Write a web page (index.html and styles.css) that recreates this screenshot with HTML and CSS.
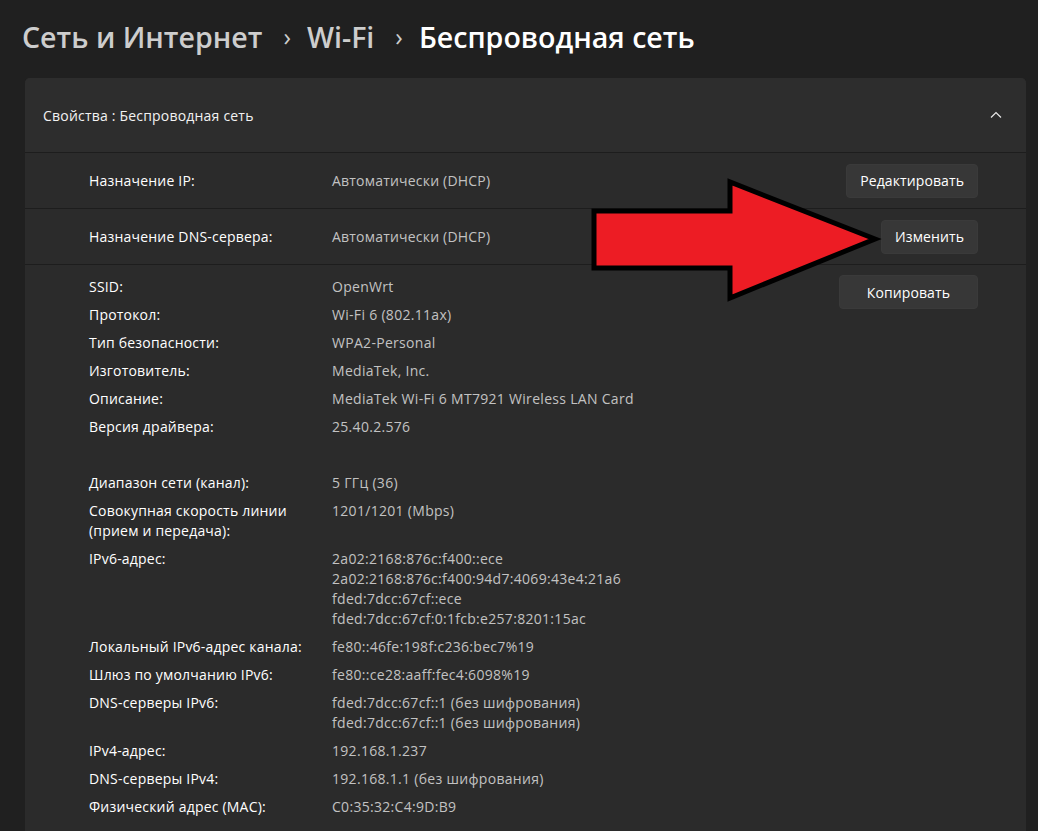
FILE: index.html
```html
<!DOCTYPE html>
<html lang="ru">
<head>
<meta charset="utf-8">
<title>Беспроводная сеть</title>
<link rel="stylesheet" href="styles.css">
</head>
<body>
<div class="page">
  <h1 class="crumbs">
    <span class="crumb">Сеть и Интернет</span>
    <span class="sep">›</span>
    <span class="crumb">Wi-Fi</span>
    <span class="sep">›</span>
    <span class="crumb current">Беспроводная сеть</span>
  </h1>

  <section class="card">
    <div class="card-head">
      <span class="head-title">Свойства : Беспроводная сеть</span>
      <svg class="caret" width="12" height="8" viewBox="0 0 12 8"><path d="M1 6.5 L6 1.5 L11 6.5" fill="none" stroke="#e8e8e8" stroke-width="1.2"/></svg>
    </div>

    <div class="row">
      <span class="label">Назначение IP:</span>
      <span class="value">Автоматически (DHCP)</span>
      <button class="btn">Редактировать</button>
    </div>
    <div class="row">
      <span class="label">Назначение DNS-сервера:</span>
      <span class="value">Автоматически (DHCP)</span>
      <button class="btn">Изменить</button>
    </div>

    <div class="details">
      <dl class="props">
        <dt>SSID:</dt><dd>OpenWrt</dd>
        <dt>Протокол:</dt><dd>Wi-Fi 6 (802.11ax)</dd>
        <dt>Тип безопасности:</dt><dd>WPA2-Personal</dd>
        <dt>Изготовитель:</dt><dd>MediaTek, Inc.</dd>
        <dt>Описание:</dt><dd>MediaTek Wi-Fi 6 MT7921 Wireless LAN Card</dd>
        <dt>Версия драйвера:</dt><dd>25.40.2.576</dd>
        <dt class="blank">&nbsp;</dt><dd class="blank">&nbsp;</dd>
        <dt>Диапазон сети (канал):</dt><dd>5 ГГц (36)</dd>
        <dt>Совокупная скорость линии<br>(прием и передача):</dt><dd>1201/1201 (Mbps)</dd>
        <dt>IPv6-адрес:</dt><dd>2a02:2168:876c:f400::ece<br>2a02:2168:876c:f400:94d7:4069:43e4:21a6<br>fded:7dcc:67cf::ece<br>fded:7dcc:67cf:0:1fcb:e257:8201:15ac</dd>
        <dt>Локальный IPv6-адрес канала:</dt><dd>fe80::46fe:198f:c236:bec7%19</dd>
        <dt>Шлюз по умолчанию IPv6:</dt><dd>fe80::ce28:aaff:fec4:6098%19</dd>
        <dt>DNS-серверы IPv6:</dt><dd>fded:7dcc:67cf::1 (без шифрования)<br>fded:7dcc:67cf::1 (без шифрования)</dd>
        <dt>IPv4-адрес:</dt><dd>192.168.1.237</dd>
        <dt>DNS-серверы IPv4:</dt><dd>192.168.1.1 (без шифрования)</dd>
        <dt>Физический адрес (MAC):</dt><dd>C0:35:32:C4:9D:B9</dd>
      </dl>
      <button class="btn btn-wide">Копировать</button>
    </div>
  </section>

  <svg class="arrow" width="300" height="130" viewBox="0 0 300 130">
    <polygon points="7,34 143,34 143,5 288,62 143,121 143,91 7,91" fill="#ed1c24" stroke="#000" stroke-width="5" stroke-linejoin="miter"/>
  </svg>
</div>
</body>
</html>
```

FILE: styles.css
```css
* { box-sizing: border-box; }

html, body {
  margin: 0;
  background: #202020;
  height: 100%;
  overflow: hidden;
}

body {
  font-family: "Open Sans", "Noto Sans", sans-serif;
  color: #ffffff;
}

.page {
  position: relative;
  padding: 0 12px 0 25px;
}

.crumbs {
  margin: 0;
  height: 78px;
  display: flex;
  align-items: center;
  font-size: 28.6px;
  font-weight: 600;
  letter-spacing: 0;
  margin-left: -3px;
  padding-bottom: 6px;
}

.crumb { color: #cdcdcd; }
.crumb.current { color: #ffffff; }
.sep {
  color: #cdcdcd;
  font-size: 25px;
  font-weight: 400;
  margin: 0 16px 0 21px;
}

.card {
  width: 1001px;
  background: #2b2b2b;
  border-radius: 5px 5px 0 0;
  min-height: 760px;
}

.card-head {
  height: 75px;
  display: flex;
  align-items: center;
  justify-content: space-between;
  padding: 0 24px 0 18px;
  background: #2d2d2d;
  border-radius: 5px 5px 0 0;
  border-bottom: 1px solid #1d1d1d;
}

.head-title {
  font-size: 14px;
  letter-spacing: 0.2px;
  color: #f2f2f2;
}

.caret { display: block; }

.row {
  height: 56px;
  display: grid;
  grid-template-columns: 243px 1fr auto;
  align-items: center;
  padding: 0 48px 0 64px;
  border-bottom: 1px solid #1d1d1d;
  font-size: 14px;
  letter-spacing: 0.2px;
}

.label { color: #ffffff; }
.value { color: #c2c2c2; }

.btn {
  font-family: inherit;
  font-size: 14px;
  letter-spacing: 0.1px;
  color: #ffffff;
  background: #373737;
  border: 1px solid #3a3a3a;
  border-radius: 4px;
  height: 34px;
  padding: 0 13px;
}

.btn-wide { padding: 0 27px; }

.details {
  display: flex;
  justify-content: space-between;
  align-items: flex-start;
  padding: 10px 48px 0 64px;
}

.props {
  margin: 2px 0 0 0;
  display: grid;
  grid-template-columns: 243px auto;
  row-gap: 8px;
  font-size: 14px;
  line-height: 20px;
  letter-spacing: 0.2px;
}

.props dt { color: #ffffff; }
.props dd { margin: 0; color: #c2c2c2; letter-spacing: 0.3px; }

.arrow {
  position: absolute;
  left: 587px;
  top: 177px;
}
```
